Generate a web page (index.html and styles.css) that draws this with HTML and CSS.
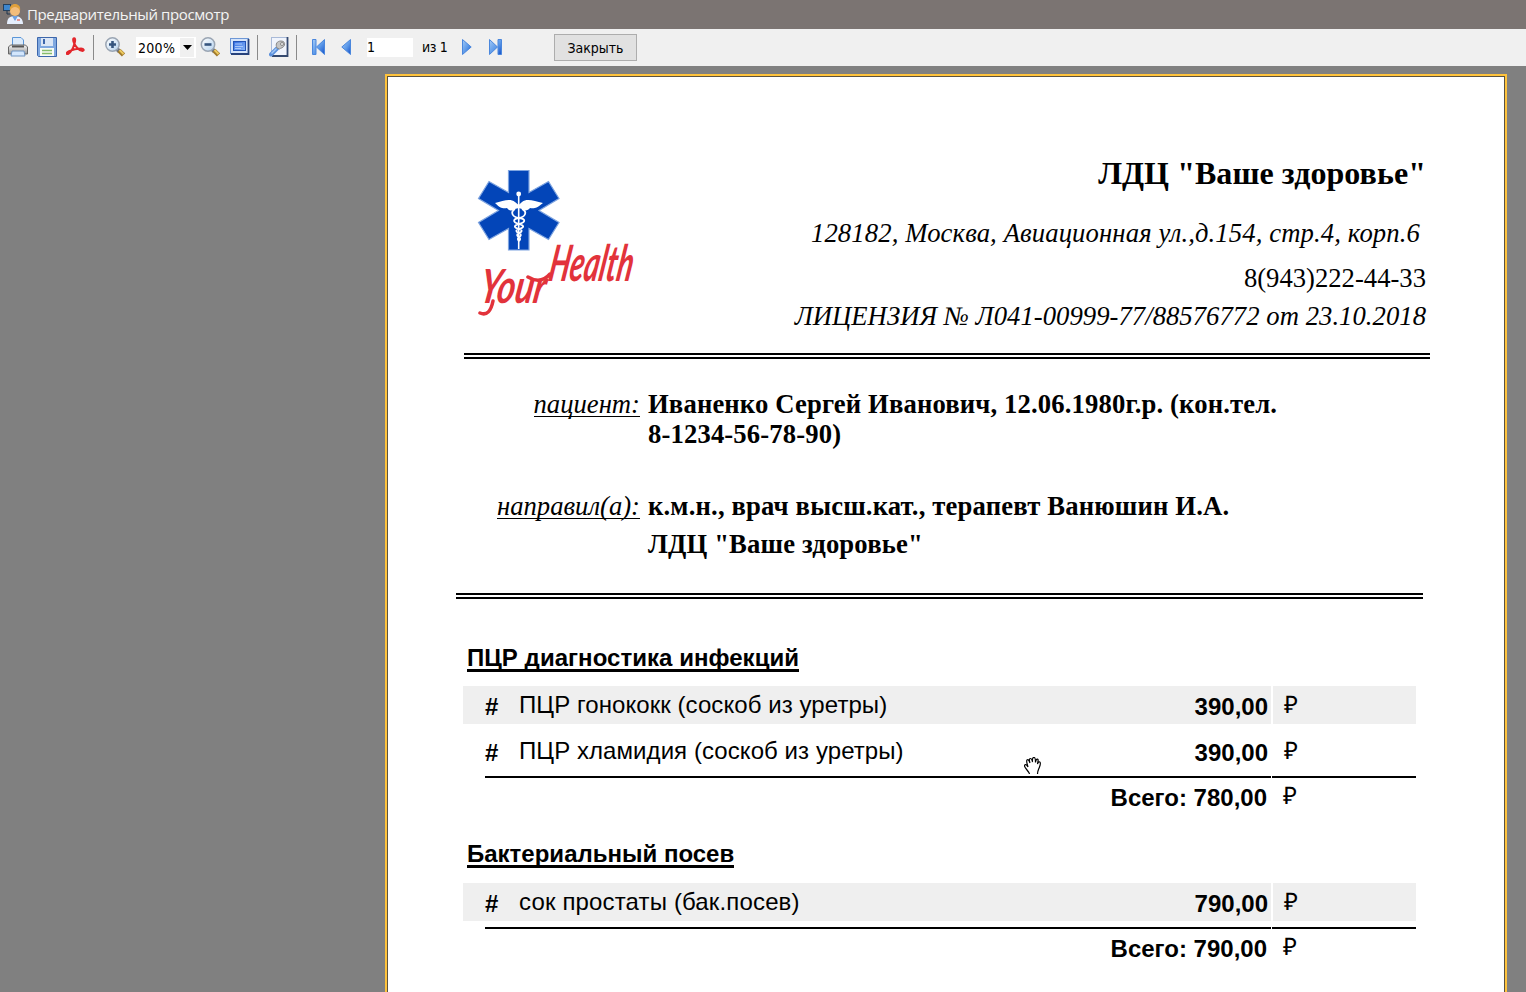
FILE: index.html
```html
<!DOCTYPE html>
<html lang="ru">
<head>
<meta charset="utf-8">
<title>Предварительный просмотр</title>
<link rel="stylesheet" href="styles.css">
</head>
<body>
<svg width="0" height="0" class="defs" aria-hidden="true">
  <defs>
    <linearGradient id="blue" x1="0" y1="0" x2="1" y2="1"><stop offset="0" stop-color="#a3cbf8"/><stop offset=".55" stop-color="#5b98e8"/><stop offset="1" stop-color="#1450c8"/></linearGradient>
    <linearGradient id="grey" x1="0" y1="0" x2="0" y2="1"><stop offset="0" stop-color="#f4f4f4"/><stop offset="1" stop-color="#9a9a9a"/></linearGradient>
    <linearGradient id="lens" x1="0" y1="0" x2="1" y2="1"><stop offset="0" stop-color="#ffffff"/><stop offset="1" stop-color="#b4d2ef"/></linearGradient>
    <linearGradient id="screen" x1="0" y1="0" x2="1" y2="1"><stop offset="0" stop-color="#2f6ae0"/><stop offset="1" stop-color="#8db9f8"/></linearGradient>
  </defs>
</svg>
<header class="titlebar">
  <svg class="app-icon" width="20" height="22" viewBox="0 0 20 22">
    <rect x="0.500" y="1.500" width="7" height="6" fill="#3d86cf" stroke="#24405e"/>
    <path d="M4 8v3h3" stroke="#20354d" fill="none"/>
    <path d="M4 21c0-6 3-8 8-8s8 3 8 8z" fill="#e6eefc"/>
    <path d="M9 13l3 5 3-5z" fill="#6f9fe0"/>
    <circle cx="12" cy="8" r="5" fill="#f3bd7c"/>
    <path d="M7 8c-1-5 2-7 5-7s6 2 5 7c-1-3-3-4-5-4s-4 1-5 4z" fill="#e0a03c"/>
    <path d="M14 17h3" stroke="#e03a2a"/>
  </svg>
  <span class="titlebar-text">Предварительный просмотр</span>
</header>
<nav class="toolbar">
  <svg class="ic print" width="20" height="20" viewBox="0 0 20 20">
    <path d="M4.500 9V.500h8.500L15.500 3v6z" fill="#dcebfb" stroke="#5b96d8"/>
    <path d="M.500 10l2-2h15l2 2v7h-19z" fill="url(#grey)" stroke="#666"/>
    <path d="M4 8.500h12v2H4z" fill="#555"/>
    <path d="M4 14h12l1 5H3z" fill="#d3e6fc" stroke="#6f94c2"/>
  </svg>
  <svg class="ic save" width="20" height="20" viewBox="0 0 20 20">
    <path d="M.500.500h19v19h-18l-1-1z" fill="#7fa8e0" stroke="#3c66ab"/>
    <rect x="4" y="1" width="12" height="8" fill="#dbe6f5"/>
    <rect x="6" y="2" width="2" height="5" fill="#3c66ab"/>
    <rect x="3" y="11" width="14" height="8" fill="#f7fbf5"/>
    <path d="M5 13.500h10M5 16.500h10" stroke="#86bd6b" stroke-width="1.500"/>
  </svg>
  <svg class="ic pdf" width="19" height="19" viewBox="0 0 19 19">
    <path d="M7.500 1.500c2-1 2 2 1 5C7.500 10 5 15 2.500 16.800 0 18 0 15.500 3 14.200c4-1.800 8-2.600 12-2.600 3 .2 3.500 2 1.500 2.400C13 14 9.500 9.500 8 6 7 3.500 7 2 7.500 1.500z" fill="none" stroke="#e3262c" stroke-width="2"/>
  </svg>
  <i class="sep s1"></i>
  <svg class="ic zin" width="20" height="20" viewBox="0 0 20 20">
    <path d="M12 12l2.500 2.500" stroke="#6d7684" stroke-width="4"/><path d="M14 13.500l4.500 4.500" stroke="#a07a2c" stroke-width="4.500"/><path d="M14.500 13l4 4" stroke="#ecc95f" stroke-width="2"/>
    <circle cx="7.500" cy="7.500" r="6.700" fill="url(#lens)" stroke="#9aa5b3" stroke-width="1.500"/>
    <path d="M4 7.500h7M7.500 4v7" stroke="#35557f" stroke-width="2.600"/>
  </svg>
  <div class="combo"><span>200%</span><b class="combo-btn"><svg width="9" height="5" viewBox="0 0 9 5"><path d="M0 0h9L4.500 5z"/></svg></b></div>
  <svg class="ic zout" width="20" height="20" viewBox="0 0 20 20">
    <path d="M12 12l2.500 2.500" stroke="#6d7684" stroke-width="4"/><path d="M14 13.500l4.500 4.500" stroke="#a07a2c" stroke-width="4.500"/><path d="M14.500 13l4 4" stroke="#ecc95f" stroke-width="2"/>
    <circle cx="8" cy="7.500" r="6.700" fill="url(#lens)" stroke="#9aa5b3" stroke-width="1.500"/>
    <path d="M4.500 7.500h7" stroke="#35557f" stroke-width="2.600"/>
  </svg>
  <svg class="ic full" width="20" height="17" viewBox="0 0 20 17">
    <rect x=".500" y=".500" width="18" height="15" fill="#d5e4fa" stroke="#6d97d6"/>
    <path d="M18.500 1v15H1" stroke="#27427c" fill="none" stroke-width="1.800"/>
    <rect x="3.500" y="3.500" width="12" height="9" fill="url(#screen)" stroke="#2353b5"/>
    <path d="M5 6h7M5 8.500h8M5 10.500h6" stroke="#a9c8fa"/>
  </svg>
  <i class="sep s2"></i>
  <svg class="ic setup" width="20" height="20" viewBox="0 0 20 20">
    <rect x="2.500" y=".500" width="16" height="18" fill="#f0f4fc" stroke="#a9bad8"/>
    <path d="M18.500 0v19H3" stroke="#34496f" fill="none" stroke-width="1.800"/>
    <path d="M2 17.500l6-6" stroke="#5b90dc" stroke-width="4" stroke-linecap="round"/><path d="M2.500 16.500l5-5" stroke="#a4c8f6" stroke-width="1.500"/>
    <path d="M8 11c-2-4 0-7 4-7 3 0 4 2 3.500 4-1 3-4 3-5 4z" fill="#c4c4c4" stroke="#8a8a8a"/>
    <circle cx="13" cy="7" r="1.500" fill="#f4f4f4" stroke="#888"/>
  </svg>
  <i class="sep s3"></i>
  <svg class="ic first" width="13" height="16" viewBox="0 0 13 16"><path d="M.500.500h3.500v15H.500zM12.500.500v15L4.500 8z" fill="url(#blue)" stroke="#4a87dd"/></svg>
  <svg class="ic prev" width="10" height="16" viewBox="0 0 10 16"><path d="M9.500.500v15L.800 8z" fill="url(#blue)" stroke="#4a87dd"/></svg>
  <div class="page-input">1</div>
  <span class="of">из 1</span>
  <svg class="ic next" width="10" height="16" viewBox="0 0 10 16"><path d="M.500.500v15L9.200 8z" fill="url(#blue)" stroke="#4a87dd"/></svg>
  <svg class="ic last" width="13" height="16" viewBox="0 0 13 16"><path d="M9 .500h3.500v15H9zM.500.500v15L8.500 8z" fill="url(#blue)" stroke="#4a87dd"/></svg>
  <button class="close">Закрыть</button>
</nav>
<main class="viewer">
  <article class="paper">
    <section class="letterhead">
      <svg class="logo" width="180" height="160" viewBox="470 165 180 160">
        <path d="M508.500 170.500h20.500v22l19.500-11 10.500 17-20 12 20 12-10.500 17-19.500-11v21.500h-20.500v-21.500l-19.500 11-10.500-17 20-12-20-12 10.500-17 19.500 11z" fill="#0345b8" stroke="#7ea4e0" stroke-width="1.200"/>
        <path d="M495 203c8-2 15-5 20-1l3.700 3 3.300-3c5-4 12-1 21 1-6 5-9 6-13 5-2 3-6 3-8 1l-3.300-1-3.700 1c-2 2-6 2-8-1-4 1-7 0-12-5z" fill="#fff"/>
        <circle cx="518.700" cy="194" r="2.400" fill="#fff"/>
        <path d="M518.700 195v54" stroke="#fff" stroke-width="1.600"/>
        <path d="M515 209c-5 3-3 8 4 9s7 4 0 6-4 4 0 5 3 3 0 4-2 3 0 4 1 3 0 4M522 209c6 3 3 8-3 9s-7 4 0 6 4 4 0 5-3 3 0 4 2 3 0 4-1 3 0 4" fill="none" stroke="#fff" stroke-width="1.800"/>
        <text class="script" transform="translate(547 281) skewX(-10)" textLength="84" lengthAdjust="spacingAndGlyphs" font-size="50">Health</text>
        <text class="script" transform="translate(478 303) skewX(-10)" textLength="66" lengthAdjust="spacingAndGlyphs" font-size="47">Your</text>
        <path d="M528 277c8 5 16 4 22-3M480 313c7 3 11-2 13-12" class="swash"/>
      </svg>
      <div class="org">
        <h1>ЛДЦ "Ваше здоровье"</h1>
        <p class="address">128182, Москва, Авиационная ул.,д.154, стр.4, корп.6</p>
        <p class="phone">8(943)222-44-33</p>
        <p class="license">ЛИЦЕНЗИЯ № Л041-00999-77/88576772 от 23.10.2018</p>
      </div>
    </section>
    <div class="rule rule-a"></div>
    <dl class="info">
      <dt><span class="l1">пациент:</span></dt>
      <dd class="patient"><span class="p1">Иваненко Сергей Иванович, 12.06.1980г.р. (кон.тел.</span><span class="p2">8-1234-56-78-90)</span></dd>
      <dt><span class="l2">направил(а):</span></dt>
      <dd class="doctor"><span class="d1">к.м.н., врач высш.кат., терапевт Ванюшин И.А.</span><span class="d2">ЛДЦ "Ваше здоровье"</span></dd>
    </dl>
    <div class="rule rule-b"></div>
    <section class="group">
      <h2 class="h-a">ПЦР диагностика инфекций</h2>
      <div class="row shaded"><div class="main"><b class="hash">#</b><span class="name n1">ПЦР гонококк (соскоб из уретры)</span><b class="price">390,00</b></div><div class="cur">₽</div></div>
      <div class="row"><div class="main"><b class="hash">#</b><span class="name n2">ПЦР хламидия (соскоб из уретры)</span><b class="price">390,00</b></div><div class="cur">₽</div></div>
      <div class="sumline"><i></i><i></i></div>
      <div class="total"><b>Всего: 780,00</b><span>₽</span></div>
    </section>
    <section class="group second">
      <h2 class="h-b">Бактериальный посев</h2>
      <div class="row shaded"><div class="main"><b class="hash">#</b><span class="name n3">сок простаты (бак.посев)</span><b class="price">790,00</b></div><div class="cur">₽</div></div>
      <div class="sumline"><i></i><i></i></div>
      <div class="total"><b>Всего: 790,00</b><span>₽</span></div>
    </section>
  </article>
  <svg class="hand" width="18" height="18" viewBox="0 0 18 18"><path d="M5.500 17c0-2-5-6-5-8s2-2 3.500 1C3 6 2 4 3 3s2 0 3 3C5 3 5 1.500 6.500 1.500S8 3 8.500 5C8.300 2 8.500.500 10 .500s1.500 2 1.500 5c.3-2 .8-3.500 2-3.300S14 4 13.500 7c.8-2 1.500-2.500 2.300-2s.8 2-.3 5-2 4-2 7" fill="#fff" stroke="#000" stroke-width="1.200"/></svg>
</main>
</body>
</html>
```
FILE: styles.css
```css
* { box-sizing: border-box; }
body { margin: 0; height: 992px; overflow: hidden; background: #808080; color: #000; }
h1, h2, p, dl, dd { margin: 0; }
.defs { position: absolute; }

.titlebar { height: 29px; background: #7b7472; display: flex; align-items: center; padding-left: 3px; }
.app-icon { margin-top: -2px; }
.titlebar-text { margin-left: 4px; color: #f4f4f4; font: 15px/29px "Open Sans", sans-serif; letter-spacing: -0.38px; white-space: nowrap; }

.toolbar { height: 37px; background: #f0f0f0; display: flex; align-items: flex-start; padding-left: 8px; font: 14px "DejaVu Sans Condensed", "DejaVu Sans", sans-serif; font-stretch: condensed; }
.ic { flex: none; margin-top: 8px; }
.save { margin-left: 9px; }
.pdf { margin-left: 9px; }
.sep { width: 1px; height: 25px; margin-top: 6px; background: #8a8a8a; flex: none; }
.s1 { margin-left: 8px; }
.zin { margin-left: 11px; }
.combo { margin: 8px 0 0 11px; width: 60px; height: 21px; background: #fff; display: flex; justify-content: space-between; padding: 1px 2px 1px 2px; line-height: 20px; letter-spacing: 0.3px; }
.combo-btn { width: 14px; background: #f0f0f0; display: flex; align-items: center; justify-content: center; }
.zout { margin-left: 4px; }
.full { margin-left: 10px; margin-top: 9px; }
.s2 { margin-left: 7px; }
.setup { margin-left: 11px; }
.s3 { margin-left: 7px; }
.first { margin-left: 15px; margin-top: 10px; }
.prev { margin-left: 16px; margin-top: 10px; }
.page-input { margin: 9px 0 0 16px; width: 46px; height: 19px; background: #fff; line-height: 19px; }
.of { margin: 9px 0 0 9px; width: 31px; line-height: 19px; letter-spacing: -0.4px; white-space: nowrap; }
.next { margin-left: 9px; margin-top: 10px; }
.last { margin-left: 17px; margin-top: 10px; }
.close { margin: 5px 0 0 52px; width: 83px; height: 27px; padding: 0; border: 1px solid #adadad; background: #e1e1e1; font: inherit; color: #000; }

.viewer { position: relative; height: 926px; padding: 8px 0 0 385px; overflow: hidden; }
.paper { width: 1122px; height: 1600px; background: #fff; border: 2px solid #ffc33c; box-shadow: inset 0 0 0 1px #5c5340; font-family: "Liberation Serif", serif; font-size: 26.670px; line-height: 30px; }
.paper span, .paper p, .paper h1, .paper h2 { white-space: nowrap; }

.letterhead { display: flex; justify-content: space-between; height: 277px; padding: 79px 79px 0 83px; }
.logo { margin-top: 10px; overflow: visible; }
.script { font-family: Lato, sans-serif; font-style: italic; font-weight: 700; fill: #e2333b; }
.swash { fill: none; stroke: #e2333b; stroke-width: 3.5; stroke-linecap: round; }
.org { text-align: right; }
.org h1 { font-size: 32px; line-height: 36px; letter-spacing: 0.06px; }
.address { font-style: italic; letter-spacing: 0.12px; margin: 27px 6px 0 0; }
.phone { margin-top: 15px; }
.license { margin-top: 8px; font-style: italic; letter-spacing: 0.04px; }

.rule { height: 6px; border-top: 2px solid #000; border-bottom: 2px solid #000; }
.rule-a { margin-left: 77px; width: 966px; }
.rule-b { margin-left: 69px; width: 967px; }

.info { display: grid; grid-template-columns: 253px 1fr; column-gap: 8px; height: 234px; padding-top: 30px; grid-template-rows: 102px 1fr; }
.info dt { text-align: right; font-style: italic; }
.info dt span { display: inline-block; height: 27px; border-bottom: 1px solid #000; line-height: 29px; }
.info dd { font-weight: 700; letter-spacing: 0.14px; }
.info dd span { display: block; }
.info .d1 { letter-spacing: 0.17px; }
.d2 { margin-top: 8px; }

.group { font-family: "Liberation Sans", sans-serif; font-size: 24px; line-height: 28px; margin: 45px 89px 0 76px; }
.group h2 { width: max-content; margin-left: 4px; height: 28px; font-size: 24px; line-height: 28px; border-bottom: 3px solid #000; }
.h-a { letter-spacing: 0.04px; }
.group .row { display: grid; grid-template-columns: 808px 143px; column-gap: 2px; height: 38px; margin-top: 8px; }
.group h2 + .row { margin-top: 14px; }
.shaded > div { background: #efefef; }
.main { display: flex; padding: 7px 3px 0 22px; }
.hash { width: 34px; }
.name { flex: 1; margin-top: -2px; }
.n1, .n2 { letter-spacing: 0.07px; }
.n3 { letter-spacing: 0.15px; }
.cur { padding: 5px 0 0 11px; }
.sumline { display: grid; grid-template-columns: 786px 144px; column-gap: 1px; margin: 6px 0 0 22px; height: 2px; }
.sumline i { background: #000; }
.total { display: flex; margin-top: 6px; height: 28px; }
.total b { width: 804px; text-align: right; }
.total span { margin: -2px 0 0 16px; }
.second { margin-top: 28px; }
.second h2 + .row { margin-top: 15px; }

.hand { position: absolute; left: 1024px; top: 691px; }
```
